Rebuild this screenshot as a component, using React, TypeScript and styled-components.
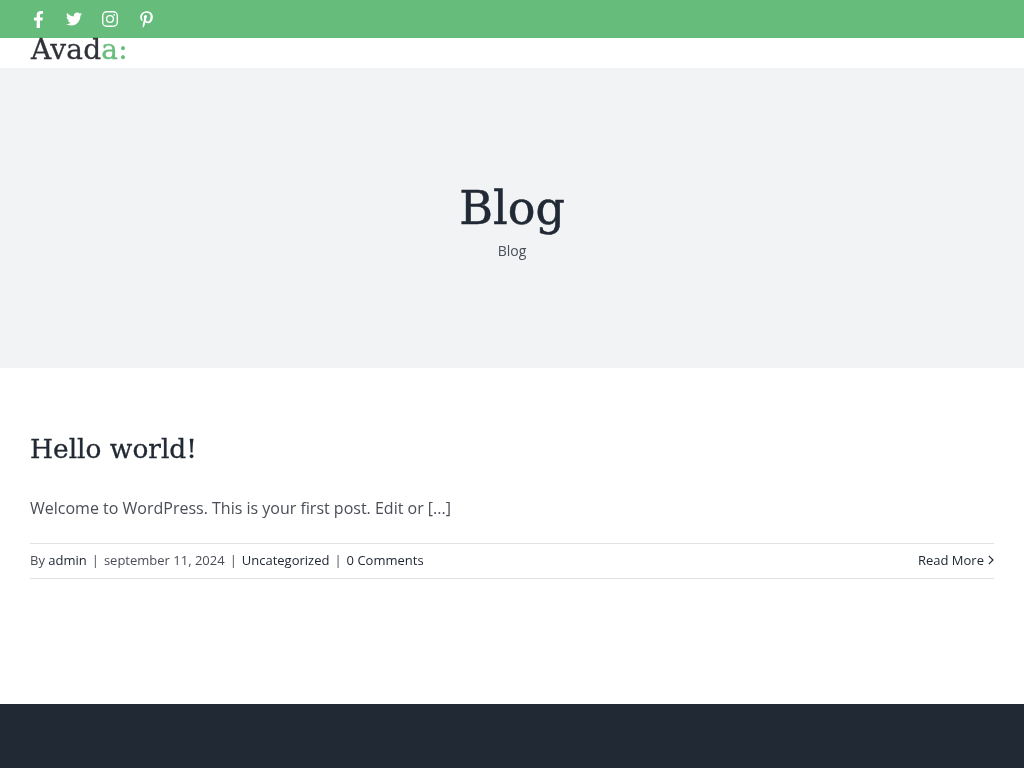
import { createGlobalStyle } from 'styled-components';
import styled from 'styled-components';
import { FaFacebookF, FaTwitter, FaPinterestP } from 'react-icons/fa';

const GlobalStyle = createGlobalStyle`
    html, body {
        margin: 0;
        padding: 0;
        background: #fff;
    }
    body {
        font-family: 'Open Sans', 'Noto Sans', sans-serif;
        color: #4a4e57;
    }
`;

const Page = styled.div`
    width: 1024px;
    height: 768px;
    overflow: hidden;
    display: flex;
    flex-direction: column;
    will-change: transform;
`;

const TopBar = styled.div`
    height: 38px;
    background-color: #65bc7b;
    display: flex;
    align-items: center;
    padding: 0 29px;
    gap: 18px;
    color: #fff;
`;

const SocialLink = styled.a<{ $size: number }>`
    width: 18px;
    height: 18px;
    display: flex;
    align-items: center;
    justify-content: center;
    color: #fff;
    font-size: ${(p) => p.$size}px;
`;

const Header = styled.div`
    height: 30px;
    background: #fff;
    padding: 0 31px;
`;

const Logo = styled.div`
    font-family: 'DejaVu Serif', serif;
    font-size: 28px;
    line-height: 24px;
    letter-spacing: 0.2px;
    color: #2f3238;
    -webkit-text-stroke: 0.3px currentColor;
`;

const LogoAccent = styled.span`
    color: #65bc7b;
`;

const Hero = styled.div`
    height: 300px;
    box-sizing: border-box;
    padding-top: 4px;
    background-color: #f2f3f5;
    display: flex;
    flex-direction: column;
    align-items: center;
    justify-content: center;
`;

const HeroTitle = styled.h1`
    margin: 0;
    font-family: 'DejaVu Serif', serif;
    font-weight: 400;
    font-size: 46px;
    line-height: 62px;
    color: #212934;
    -webkit-text-stroke: 0.5px currentColor;
`;

const Crumb = styled.div`
    font-size: 14px;
    line-height: 24px;
    color: #4a4e57;
`;

const Content = styled.main`
    flex: 1;
    padding: 61px 30px 0;
`;

const PostTitle = styled.h2`
    margin: 0;
    font-family: 'DejaVu Serif', serif;
    font-weight: 400;
    font-size: 26.4px;
    line-height: 40px;
    color: #212934;
    -webkit-text-stroke: 0.3px currentColor;
`;

const Excerpt = styled.p`
    margin: 27px 0 0;
    font-size: 16px;
    line-height: 24px;
    color: #4a4e57;
`;

const Meta = styled.div`
    margin-top: 23px;
    height: 32px;
    padding-bottom: 2px;
    border-top: 1px solid #e2e2e2;
    border-bottom: 1px solid #e2e2e2;
    display: flex;
    align-items: center;
    justify-content: space-between;
    font-size: 13px;
    line-height: 32px;
    color: #4a4e57;
`;

const MetaLink = styled.a`
    color: #212934;
`;

const Sep = styled.span`
    margin: 0 5px;
`;

const ReadMore = styled.a`
    display: flex;
    align-items: center;
    gap: 4px;
    color: #212934;
`;

const Footer = styled.footer`
    height: 64px;
    background-color: #212934;
`;

function InstagramIcon() {
    return (
        <svg width="16" height="16" viewBox="0 0 16 16" fill="none" stroke="currentColor">
            <rect x="0.7" y="0.7" width="14.6" height="14.6" rx="4" strokeWidth="1.4" />
            <circle cx="8" cy="8" r="3.4" strokeWidth="1.4" />
            <circle cx="12.2" cy="3.8" r="0.9" fill="currentColor" stroke="none" />
        </svg>
    );
}

function AngleIcon() {
    return (
        <svg width="6" height="10" viewBox="0 0 6 10" fill="none" stroke="currentColor" strokeWidth="1.2">
            <path d="M0.8 0.8 L5 5 L0.8 9.2" />
        </svg>
    );
}

export default function App() {
    return (
        <Page>
            <GlobalStyle />
            <TopBar>
                <SocialLink $size={17}><FaFacebookF /></SocialLink>
                <SocialLink $size={16}><FaTwitter /></SocialLink>
                <SocialLink $size={17}><InstagramIcon /></SocialLink>
                <SocialLink $size={17}><FaPinterestP /></SocialLink>
            </TopBar>
            <Header>
                <Logo>Avad<LogoAccent>a:</LogoAccent></Logo>
            </Header>
            <Hero>
                <HeroTitle>Blog</HeroTitle>
                <Crumb>Blog</Crumb>
            </Hero>
            <Content>
                <PostTitle>Hello world!</PostTitle>
                <Excerpt>Welcome to WordPress. This is your first post. Edit or [...]</Excerpt>
                <Meta>
                    <span>
                        By <MetaLink>admin</MetaLink>
                        <Sep>|</Sep>
                        september 11, 2024
                        <Sep>|</Sep>
                        <MetaLink>Uncategorized</MetaLink>
                        <Sep>|</Sep>
                        <MetaLink>0 Comments</MetaLink>
                    </span>
                    <ReadMore>Read More <AngleIcon /></ReadMore>
                </Meta>
            </Content>
            <Footer />
        </Page>
    );
}
